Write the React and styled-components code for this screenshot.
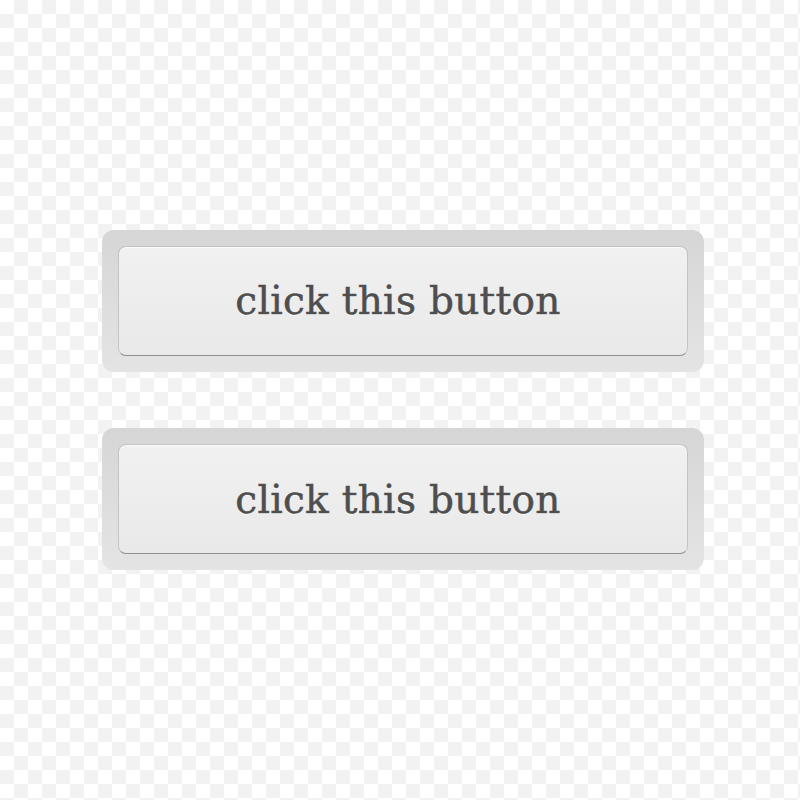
import React from "react";
import styled, { createGlobalStyle } from "styled-components";

const GlobalStyle = createGlobalStyle`
  html, body {
    margin: 0;
    padding: 0;
  }

  body {
    width: 800px;
    height: 800px;
    background-color: #ffffff;
    background-image:
      linear-gradient(45deg, #f2f2f2 25%, transparent 25%, transparent 75%, #f2f2f2 75%),
      linear-gradient(45deg, #f2f2f2 25%, transparent 25%, transparent 75%, #f2f2f2 75%);
    background-size: 28px 28px;
    background-position: 0 0, 14px 14px;
    font-family: "DejaVu Serif", "Liberation Serif", serif;
  }
`;

const Page = styled.div`
  display: flex;
  flex-direction: column;
  align-items: flex-start;
  gap: 56px;
  padding: 230px 0 0 102px;
`;

const Frame = styled.div`
  width: 602px;
  height: 142px;
  box-sizing: border-box;
  padding: 16px;
  border-radius: 12px;
  background: linear-gradient(#d6d6d6, #e4e4e4);
`;

const Button = styled.button`
  display: flex;
  align-items: center;
  justify-content: center;
  width: 100%;
  height: 100%;
  box-sizing: border-box;
  border: 1px solid #c4c4c4;
  border-bottom-color: #8f8f8f;
  border-radius: 8px;
  background: linear-gradient(#f1f1f1, #e9e9e9);
  box-shadow: inset 0 1px 0 #fafafa;
  font-family: "DejaVu Serif", "Liberation Serif", serif;
  font-size: 39px;
  letter-spacing: 0.3px;
  color: #4e4e4e;
  -webkit-text-stroke: 0.5px #4e4e4e;
  text-shadow: 0 1px 0 #ffffff;
  cursor: pointer;
  padding: 0 10px ${(p) => p.$lift}px 0;
`;

const App = () => {
  const buttons = [{ id: "b1", lift: 2 }, { id: "b2", lift: 0 }];

  return (
    <>
      <GlobalStyle />
      <Page>
        {buttons.map((b) => (
          <Frame key={b.id}>
            <Button $lift={b.lift}>click this button</Button>
          </Frame>
        ))}
      </Page>
    </>
  );
};

export default App;
